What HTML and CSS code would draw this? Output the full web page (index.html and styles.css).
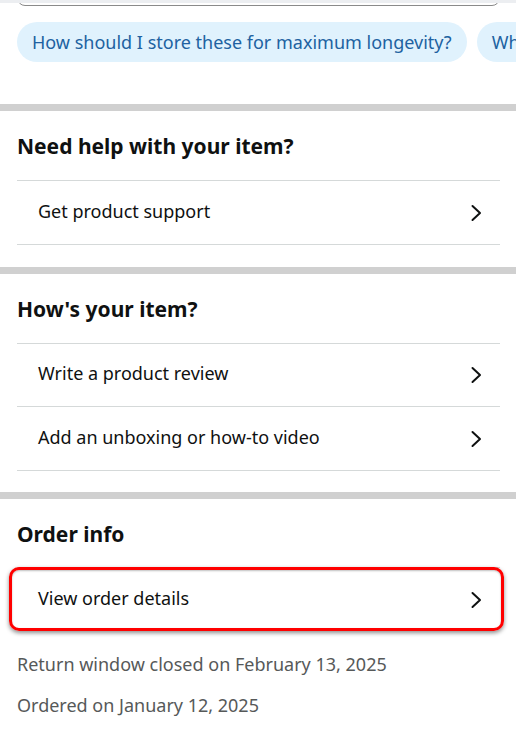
FILE: index.html
```html
<!DOCTYPE html>
<html lang="en">
<head>
<meta charset="utf-8">
<title>Order</title>
<link rel="stylesheet" href="styles.css">
</head>
<body>
<div class="header-shade"></div>
<div class="search"></div>
<div class="pills">
  <span class="pill">How should I store these for maximum longevity?</span>
  <span class="pill">What size are these?</span>
</div>

<section class="section">
  <h2 class="section-title">Need help with your item?</h2>
  <ul class="rows">
    <li class="row"><span>Get product support</span><svg class="chev" viewBox="0 0 12 18" width="12" height="18"><path d="M2.5 2 L10 9 L2.5 16" /></svg></li>
  </ul>
</section>

<section class="section section-mid">
  <h2 class="section-title">How's your item?</h2>
  <ul class="rows">
    <li class="row row-short"><span>Write a product review</span><svg class="chev" viewBox="0 0 12 18" width="12" height="18"><path d="M2.5 2 L10 9 L2.5 16" /></svg></li>
    <li class="row"><span>Add an unboxing or how-to video</span><svg class="chev" viewBox="0 0 12 18" width="12" height="18"><path d="M2.5 2 L10 9 L2.5 16" /></svg></li>
  </ul>
</section>

<section class="section section-last">
  <h2 class="section-title">Order info</h2>
  <ul class="rows rows-open">
    <li class="row row-marked"><span>View order details</span><svg class="chev" viewBox="0 0 12 18" width="12" height="18"><path d="M2.5 2 L10 9 L2.5 16" /></svg></li>
  </ul>
  <p class="meta">Return window closed on February 13, 2025</p>
  <p class="meta">Ordered on January 12, 2025</p>
</section>
</body>
</html>
```

FILE: styles.css
```css
* { box-sizing: border-box; }
html, body { margin: 0; padding: 0; background: #fff; }
body {
  font-family: "Noto Sans", "Liberation Sans", Arial, sans-serif;
  color: #0f1111;
  overflow: hidden;
}
.header-shade {
  position: fixed;
  top: 0; left: 0; right: 0;
  height: 3px;
  background: #eceef1;
  z-index: 2;
}
.search {
  margin: -40px 16px 0 17px;
  height: 46px;
  border: 1px solid #8a8a8a;
  border-radius: 8px;
  background: #fff;
}
.pills {
  display: flex;
  gap: 10px;
  padding: 16px 0 0 17px;
  white-space: nowrap;
  overflow: hidden;
}
.pill {
  flex: none;
  height: 40px;
  line-height: 40px;
  padding: 0 15px;
  border-radius: 20px;
  background: #e0f2fd;
  color: #2162a1;
  font-size: 18px;
}
.section {
  border-top: 7px solid #d0d0d0;
  padding: 0 16px 22px 17px;
}
.pills + .section { margin-top: 42px; }
.section-mid { padding-bottom: 21px; }
.section-title {
  margin: 0;
  padding: 23px 0 22px;
  font-size: 21px;
  line-height: 24px;
  font-weight: 700;
}
.section-last .section-title { padding-bottom: 21px; }
.rows {
  list-style: none;
  margin: 0;
  padding: 0;
  border-bottom: 1px solid #d5d9d9;
}
.rows-open { border-bottom: none; }
.row {
  display: flex;
  align-items: center;
  justify-content: space-between;
  height: 64px;
  padding: 0 18px 4px 21px;
  border-top: 1px solid #d5d9d9;
  font-size: 18px;
}
.row-short { height: 63px; }
.chev { display: block; margin-top: 4px; }
.chev path {
  fill: none;
  stroke: #0f1111;
  stroke-width: 2;
  stroke-linecap: round;
  stroke-linejoin: round;
}
.row-marked { position: relative; }
.row-marked::after {
  content: "";
  position: absolute;
  left: -8px; right: -4px; top: -1px; bottom: 0;
  border: 3px solid #ff0000;
  border-radius: 10px;
  box-shadow: 0 2px 4px rgba(0,0,0,0.45), inset 0 1px 2px rgba(0,0,0,0.25);
}
.section-last { padding-bottom: 40px; }
.meta {
  margin: 0;
  font-size: 18px;
  line-height: 41px;
  color: #565959;
}
.rows-open + .meta { margin-top: 13px; }
```
